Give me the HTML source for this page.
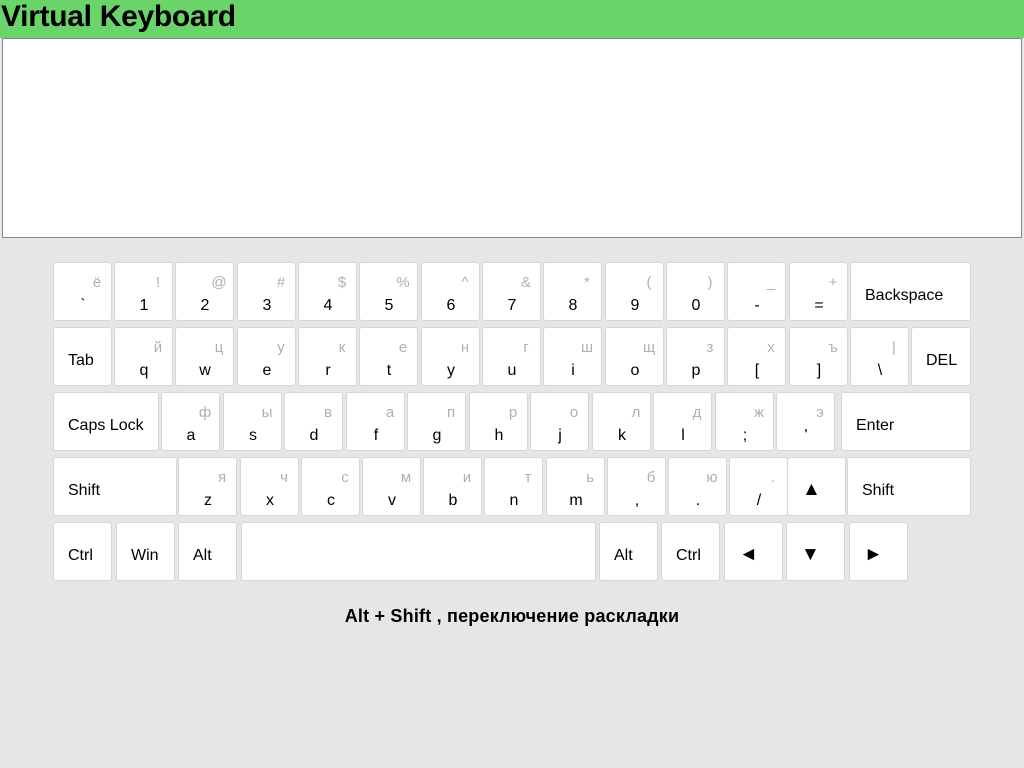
<!DOCTYPE html>
<html><head><meta charset="utf-8"><style>
*{box-sizing:border-box;margin:0;padding:0}
body{width:1024px;height:768px;background:#e6e6e6;font-family:"Liberation Sans","DejaVu Sans",sans-serif;position:relative;overflow:hidden}
.hd{position:absolute;left:0;top:0;width:1024px;height:38px;background:#6ad36a}
.hd h1{position:absolute;left:1px;top:0px;font-size:30px;font-weight:bold;color:#000;letter-spacing:-0.3px}
.ta{position:absolute;left:2px;top:38px;width:1020px;height:200px;background:#fff;border:1px solid #888}
.k{position:absolute;width:59px;height:59px;background:#fff;border:1px solid #d6d6d6;border-radius:3px;color:#000;font-size:16px}
.k .m{position:absolute;left:14px;width:30px;text-align:center;bottom:5px;line-height:18px}
.k .s{position:absolute;left:33px;width:20px;text-align:center;top:12px;font-size:15px;color:#b0b0b0;line-height:16px}
.k .f{position:absolute;left:14px;top:24px;line-height:18px}
.k .a{font-size:19px;top:23px}
.ft{position:absolute;left:0;width:1024px;top:606px;text-align:center;font-weight:bold;font-size:18px;letter-spacing:0.2px}
</style></head><body>
<div class="hd"><h1>Virtual Keyboard</h1></div>
<div class="ta"></div>

<!-- Row 1 -->
<div class="k" style="left:53px;top:262px"><span class="m">`</span><span class="s">ё</span></div>
<div class="k" style="left:114px;top:262px"><span class="m">1</span><span class="s">!</span></div>
<div class="k" style="left:175px;top:262px"><span class="m">2</span><span class="s">@</span></div>
<div class="k" style="left:237px;top:262px"><span class="m">3</span><span class="s">#</span></div>
<div class="k" style="left:298px;top:262px"><span class="m">4</span><span class="s">$</span></div>
<div class="k" style="left:359px;top:262px"><span class="m">5</span><span class="s">%</span></div>
<div class="k" style="left:421px;top:262px"><span class="m">6</span><span class="s">^</span></div>
<div class="k" style="left:482px;top:262px"><span class="m">7</span><span class="s">&amp;</span></div>
<div class="k" style="left:543px;top:262px"><span class="m">8</span><span class="s">*</span></div>
<div class="k" style="left:605px;top:262px"><span class="m">9</span><span class="s">(</span></div>
<div class="k" style="left:666px;top:262px"><span class="m">0</span><span class="s">)</span></div>
<div class="k" style="left:727px;top:262px"><span class="m">-</span><span class="s">_</span></div>
<div class="k" style="left:789px;top:262px"><span class="m">=</span><span class="s">+</span></div>
<div class="k" style="left:850px;top:262px;width:121px"><span class="f">Backspace</span></div>

<!-- Row 2 -->
<div class="k" style="left:53px;top:327px"><span class="f">Tab</span></div>
<div class="k" style="left:114px;top:327px"><span class="m">q</span><span class="s">й</span></div>
<div class="k" style="left:175px;top:327px"><span class="m">w</span><span class="s">ц</span></div>
<div class="k" style="left:237px;top:327px"><span class="m">e</span><span class="s">у</span></div>
<div class="k" style="left:298px;top:327px"><span class="m">r</span><span class="s">к</span></div>
<div class="k" style="left:359px;top:327px"><span class="m">t</span><span class="s">е</span></div>
<div class="k" style="left:421px;top:327px"><span class="m">y</span><span class="s">н</span></div>
<div class="k" style="left:482px;top:327px"><span class="m">u</span><span class="s">г</span></div>
<div class="k" style="left:543px;top:327px"><span class="m">i</span><span class="s">ш</span></div>
<div class="k" style="left:605px;top:327px"><span class="m">o</span><span class="s">щ</span></div>
<div class="k" style="left:666px;top:327px"><span class="m">p</span><span class="s">з</span></div>
<div class="k" style="left:727px;top:327px"><span class="m">[</span><span class="s">х</span></div>
<div class="k" style="left:789px;top:327px"><span class="m">]</span><span class="s">ъ</span></div>
<div class="k" style="left:850px;top:327px"><span class="m">\</span><span class="s">|</span></div>
<div class="k" style="left:911px;top:327px;width:60px"><span class="f">DEL</span></div>

<!-- Row 3 -->
<div class="k" style="left:53px;top:392px;width:106px"><span class="f">Caps Lock</span></div>
<div class="k" style="left:161px;top:392px"><span class="m">a</span><span class="s">ф</span></div>
<div class="k" style="left:223px;top:392px"><span class="m">s</span><span class="s">ы</span></div>
<div class="k" style="left:284px;top:392px"><span class="m">d</span><span class="s">в</span></div>
<div class="k" style="left:346px;top:392px"><span class="m">f</span><span class="s">а</span></div>
<div class="k" style="left:407px;top:392px"><span class="m">g</span><span class="s">п</span></div>
<div class="k" style="left:469px;top:392px"><span class="m">h</span><span class="s">р</span></div>
<div class="k" style="left:530px;top:392px"><span class="m">j</span><span class="s">о</span></div>
<div class="k" style="left:592px;top:392px"><span class="m">k</span><span class="s">л</span></div>
<div class="k" style="left:653px;top:392px"><span class="m">l</span><span class="s">д</span></div>
<div class="k" style="left:715px;top:392px"><span class="m">;</span><span class="s">ж</span></div>
<div class="k" style="left:776px;top:392px"><span class="m">'</span><span class="s">э</span></div>
<div class="k" style="left:841px;top:392px;width:130px"><span class="f">Enter</span></div>

<!-- Row 4 -->
<div class="k" style="left:53px;top:457px;width:124px"><span class="f">Shift</span></div>
<div class="k" style="left:178px;top:457px"><span class="m">z</span><span class="s">я</span></div>
<div class="k" style="left:240px;top:457px"><span class="m">x</span><span class="s">ч</span></div>
<div class="k" style="left:301px;top:457px"><span class="m">c</span><span class="s">с</span></div>
<div class="k" style="left:362px;top:457px"><span class="m">v</span><span class="s">м</span></div>
<div class="k" style="left:423px;top:457px"><span class="m">b</span><span class="s">и</span></div>
<div class="k" style="left:484px;top:457px"><span class="m">n</span><span class="s">т</span></div>
<div class="k" style="left:546px;top:457px"><span class="m">m</span><span class="s">ь</span></div>
<div class="k" style="left:607px;top:457px"><span class="m">,</span><span class="s">б</span></div>
<div class="k" style="left:668px;top:457px"><span class="m">.</span><span class="s">ю</span></div>
<div class="k" style="left:729px;top:457px"><span class="m">/</span><span class="s">.</span></div>
<div class="k" style="left:787px;top:457px"><span class="f a">▲</span></div>
<div class="k" style="left:847px;top:457px;width:124px"><span class="f">Shift</span></div>

<!-- Row 5 -->
<div class="k" style="left:53px;top:522px"><span class="f">Ctrl</span></div>
<div class="k" style="left:116px;top:522px"><span class="f">Win</span></div>
<div class="k" style="left:178px;top:522px"><span class="f">Alt</span></div>
<div class="k" style="left:241px;top:522px;width:355px"></div>
<div class="k" style="left:599px;top:522px"><span class="f">Alt</span></div>
<div class="k" style="left:661px;top:522px"><span class="f">Ctrl</span></div>
<div class="k" style="left:724px;top:522px"><span class="f a">◄</span></div>
<div class="k" style="left:786px;top:522px"><span class="f a">▼</span></div>
<div class="k" style="left:849px;top:522px"><span class="f a">►</span></div>

<div class="ft">Alt + Shift , переключение раскладки</div>
</body></html>
